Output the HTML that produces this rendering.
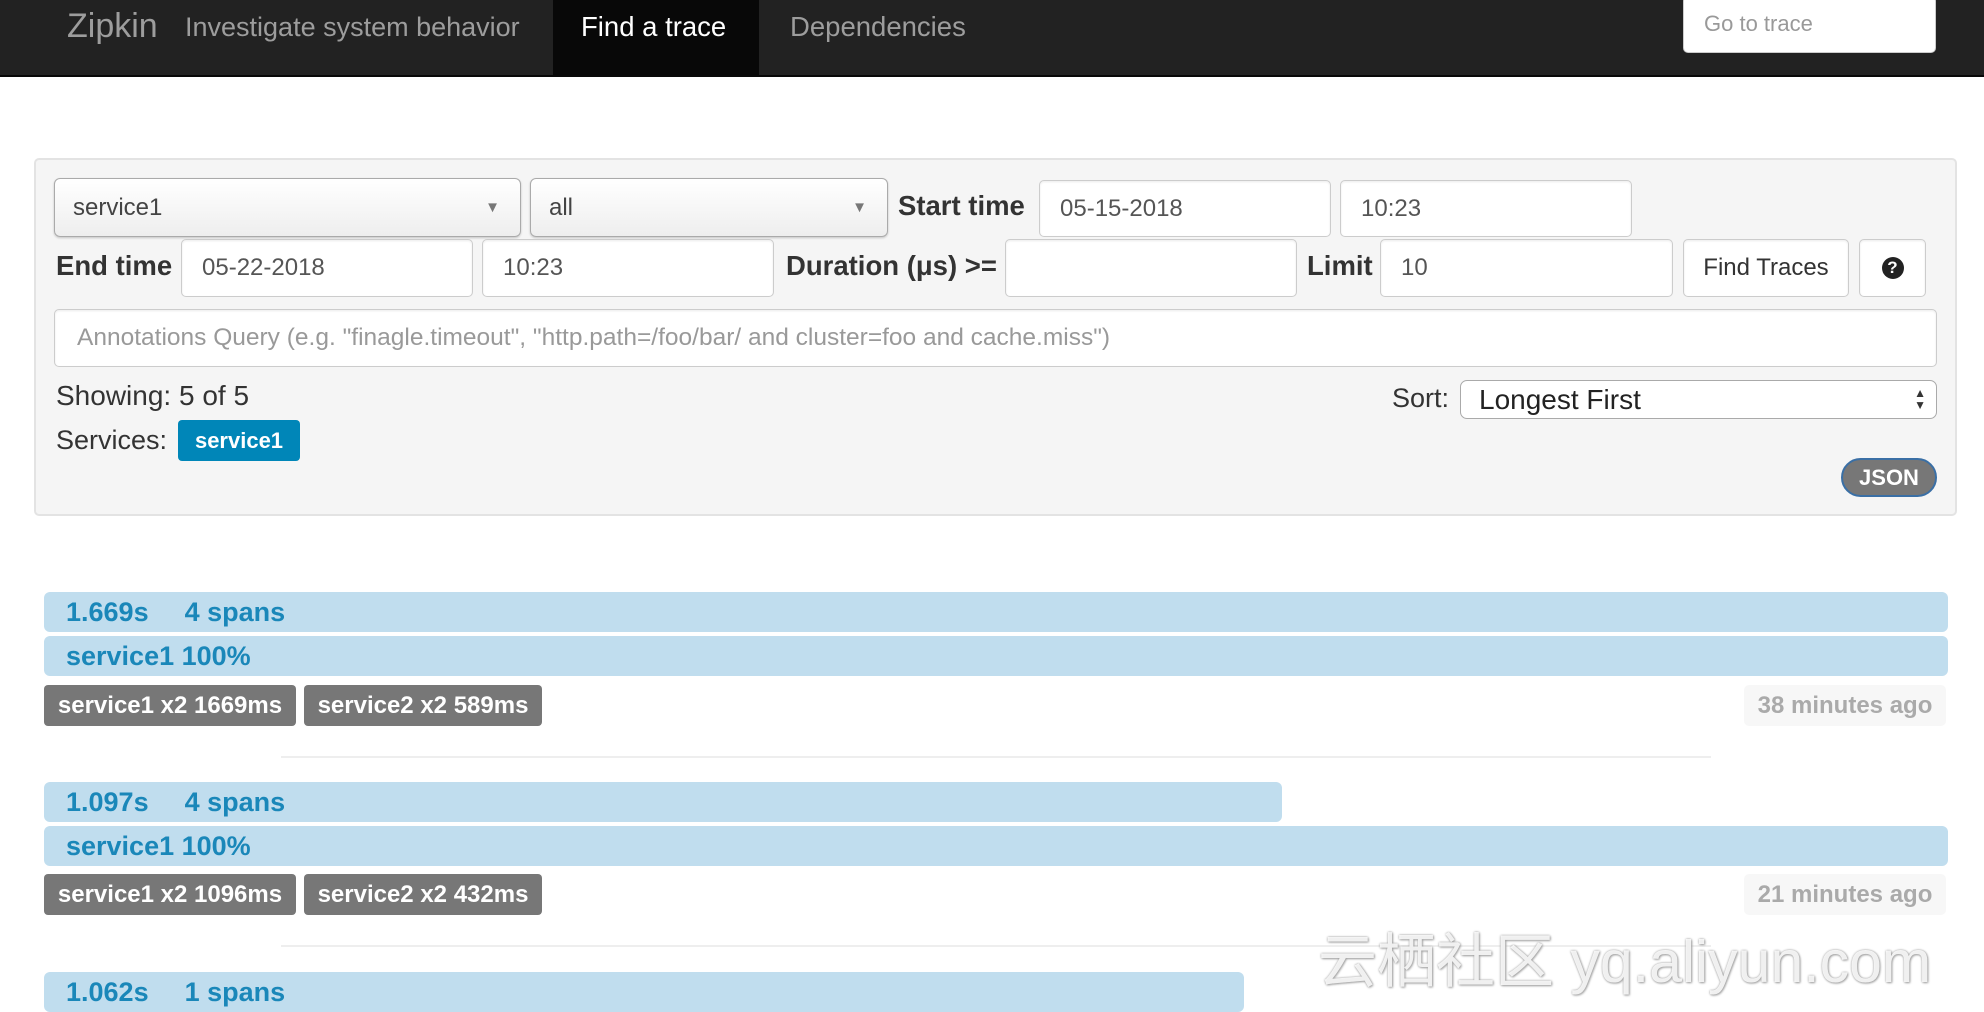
<!DOCTYPE html>
<html><head><meta charset="utf-8"><style>
*{box-sizing:border-box;margin:0;padding:0}
body{width:1984px;height:992px;overflow:hidden;background:#fff;font-family:"Liberation Sans",Helvetica,Arial,sans-serif;color:#333;position:relative}
.a{position:absolute}
.nav{left:0;top:0;width:1984px;height:77px;background:#222;border-bottom:2px solid #080808}
.inp{position:absolute;background:#fff;border:1.5px solid #ccc;border-radius:5px;box-shadow:inset 0 1px 2px rgba(0,0,0,.08);font-size:24px;color:#555;padding-left:20px;display:flex;align-items:center}
.sel{position:absolute;border:1.5px solid #aaa;border-radius:6px;background:linear-gradient(#fff,#eee);box-shadow:0 1px 2px rgba(0,0,0,.2);font-size:24px;color:#444;padding-left:18px;display:flex;align-items:center}
.lbl{position:absolute;font-weight:bold;font-size:27.5px;color:#333}
.bar{position:absolute;left:44px;height:40px;background:#c0ddee;border-radius:6px;color:#1a87b9;font-weight:bold;font-size:27px;padding-left:22px;line-height:40px}
.gb{position:absolute;height:41px;background:#777;color:#fff;font-weight:bold;font-size:24px;border-radius:4px;line-height:41px;text-align:center;white-space:nowrap}
.ago{position:absolute;left:1744px;width:202px;height:41px;background:#f7f7f7;border-radius:5px;color:#aaa;font-weight:bold;font-size:24px;line-height:41px;text-align:center}
.hr{position:absolute;left:281px;width:1430px;height:2px;background:#eee}
</style></head><body>
<div class="a nav"></div>
<div class="a" style="left:67px;top:7px;font-size:34px;color:#9d9d9d">Zipkin</div>
<div class="a" style="left:185px;top:12px;font-size:27px;color:#9d9d9d">Investigate system behavior</div>
<div class="a" style="left:553px;top:0;width:206px;height:75px;background:#080808"></div>
<div class="a" style="left:581px;top:11px;font-size:27.5px;color:#fff">Find a trace</div>
<div class="a" style="left:790px;top:11px;font-size:27.5px;color:#9d9d9d">Dependencies</div>
<div class="a" style="left:1683px;top:-4px;width:253px;height:57px;background:#fff;border-radius:5px;border:1px solid #ccc;font-size:22px;color:#999;padding:14px 0 0 20px">Go to trace</div>

<div class="a" style="left:34px;top:158px;width:1923px;height:358px;background:#f5f5f5;border:2px solid #e3e3e3;border-radius:5px"></div>
<div class="sel" style="left:54px;top:178px;width:467px;height:59px">service1<span style="position:absolute;right:20px;font-size:15px;color:#777">▼</span></div>
<div class="sel" style="left:530px;top:178px;width:358px;height:59px">all<span style="position:absolute;right:20px;font-size:15px;color:#777">▼</span></div>
<div class="lbl" style="left:898px;top:190px">Start time</div>
<div class="inp" style="left:1039px;top:180px;width:292px;height:57px">05-15-2018</div>
<div class="inp" style="left:1340px;top:180px;width:292px;height:57px">10:23</div>
<div class="lbl" style="left:56px;top:250px">End time</div>
<div class="inp" style="left:181px;top:239px;width:292px;height:58px">05-22-2018</div>
<div class="inp" style="left:482px;top:239px;width:292px;height:58px">10:23</div>
<div class="lbl" style="left:786px;top:250px">Duration (μs) &gt;=</div>
<div class="inp" style="left:1005px;top:239px;width:292px;height:58px"></div>
<div class="lbl" style="left:1307px;top:250px">Limit</div>
<div class="inp" style="left:1380px;top:239px;width:293px;height:58px">10</div>
<div class="inp" style="left:1683px;top:239px;width:166px;height:58px;color:#333;justify-content:center;padding:0">Find Traces</div>
<div class="inp" style="left:1859px;top:239px;width:67px;height:58px;justify-content:center;padding:0"><span style="width:22px;height:22px;border-radius:50%;background:#222;color:#fff;font-size:17px;font-weight:bold;display:flex;align-items:center;justify-content:center">?</span></div>
<div class="inp" style="left:54px;top:309px;width:1883px;height:58px;color:#999;padding-left:22px;font-size:24.5px">Annotations Query (e.g. "finagle.timeout", "http.path=/foo/bar/ and cluster=foo and cache.miss")</div>
<div class="a" style="left:56px;top:380px;font-size:28px;color:#333">Showing: 5 of 5</div>
<div class="a" style="left:56px;top:425px;font-size:27px;color:#333">Services:</div>
<div class="a" style="left:178px;top:420px;width:122px;height:41px;background:#0086b8;border-radius:4px;color:#fff;font-weight:bold;font-size:22px;line-height:41px;text-align:center">service1</div>
<div class="a" style="left:1392px;top:383px;font-size:27px;color:#333">Sort:</div>
<div class="a" style="left:1460px;top:380px;width:477px;height:39px;border:1.5px solid #aaa;border-radius:7px;background:#fff;font-size:28px;color:#222;padding:3px 0 0 18px">Longest First<span style="position:absolute;right:10px;top:6px;font-size:12px;line-height:12px;color:#333">▲<br>▼</span></div>
<div class="a" style="left:1841px;top:458px;width:96px;height:39px;background:#777;border:2px solid #3a6fa5;border-radius:20px;color:#fff;font-weight:bold;font-size:22px;line-height:35px;text-align:center">JSON</div>

<div class="bar" style="top:592px;width:1904px">1.669s<span style="margin-left:36px">4 spans</span></div>
<div class="bar" style="top:636px;width:1904px">service1 100%</div>
<div class="gb" style="left:44px;top:685px;width:252px">service1 x2 1669ms</div>
<div class="gb" style="left:304px;top:685px;width:238px">service2 x2 589ms</div>
<div class="ago" style="top:685px">38 minutes ago</div>
<div class="hr" style="top:756px"></div>

<div class="bar" style="top:782px;width:1238px">1.097s<span style="margin-left:36px">4 spans</span></div>
<div class="bar" style="top:826px;width:1904px">service1 100%</div>
<div class="gb" style="left:44px;top:874px;width:252px">service1 x2 1096ms</div>
<div class="gb" style="left:304px;top:874px;width:238px">service2 x2 432ms</div>
<div class="ago" style="top:874px">21 minutes ago</div>
<div class="hr" style="top:945px"></div>

<div class="bar" style="top:972px;width:1200px">1.062s<span style="margin-left:36px">1 spans</span></div>

<div class="a" style="left:1318px;top:914px;font-size:59px;color:rgba(255,255,255,.85);text-shadow:0 0 2px #999,1px 1px 2px #aaa;font-family:'Liberation Sans','Noto Sans CJK SC',sans-serif;white-space:nowrap">云栖社区 yq.aliyun.com</div>
</body></html>
